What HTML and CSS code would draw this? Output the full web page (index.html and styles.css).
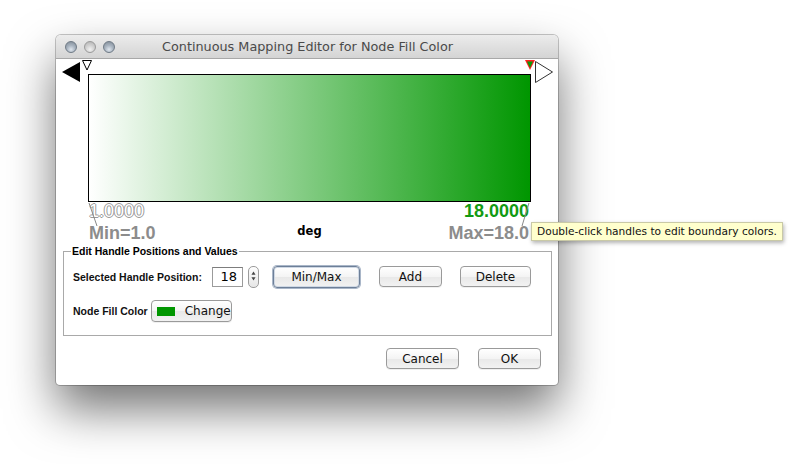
FILE: index.html
```html
<!DOCTYPE html>
<html>
<head>
<meta charset="utf-8">
<link rel="stylesheet" href="styles.css">
</head>
<body>
<div class="window">
  <div class="titlebar">
    <div class="lights">
      <span class="light"></span>
      <span class="light light-mid"></span>
      <span class="light"></span>
    </div>
    <div class="title">Continuous Mapping Editor for Node Fill Color</div>
  </div>
  <div class="content">
    <div class="slider">
      <div class="gradient"></div>
      <div class="values">
        <span class="val-min">1.0000</span>
        <span class="val-max">18.0000</span>
      </div>
      <div class="bounds">
        <span class="bound">Min=1.0</span>
        <span class="unit">deg</span>
        <span class="bound bound-max">Max=18.0</span>
      </div>
      <svg class="overlay" width="502" height="190" viewBox="0 0 502 190">
        <polygon points="6,13 24,3 24,23" fill="#000"/>
        <polygon points="26.5,1.5 35.5,1.5 31,11" fill="#fff" stroke="#000" stroke-width="1"/>
        <polygon points="469,1 479,1 474,11" fill="#ff2020"/>
        <polygon points="471,2.5 477,2.5 474,9" fill="#0a9a0a"/>
        <polygon points="479.5,2.5 479.5,23.5 496.5,13" fill="#fff" stroke="#333" stroke-width="1"/>
        <line x1="33" y1="144" x2="41" y2="167" stroke="#888" stroke-width="1"/>
        <line x1="473" y1="144" x2="466" y2="167" stroke="#888" stroke-width="1"/>
      </svg>
      <div class="tooltip">Double-click handles to edit boundary colors.</div>
    </div>
    <fieldset class="group">
      <legend>Edit Handle Positions and Values</legend>
      <div class="row row-handle">
        <span class="label">Selected Handle Position:</span>
        <span class="spin-field">18</span>
        <span class="stepper">
          <svg width="11" height="22" viewBox="0 0 11 22">
            <polygon points="3,9.5 8,9.5 5.5,5.5" fill="#444"/>
            <polygon points="3,12.5 8,12.5 5.5,16.5" fill="#444"/>
          </svg>
        </span>
        <button class="btn btn-focus btn-minmax">Min/Max</button>
        <button class="btn btn-add">Add</button>
        <button class="btn btn-delete">Delete</button>
      </div>
      <div class="row row-color">
        <span class="label">Node Fill Color</span>
        <button class="btn btn-change"><span class="swatch"></span>Change</button>
      </div>
    </fieldset>
    <div class="actions">
      <button class="btn btn-cancel">Cancel</button>
      <button class="btn btn-ok">OK</button>
    </div>
  </div>
</div>
</body>
</html>
```
FILE: styles.css
```css
html, body {
  margin: 0;
  padding: 0;
  background: #fff;
}
body {
  width: 797px;
  height: 464px;
  overflow: hidden;
  font-family: "DejaVu Sans", "Liberation Sans", sans-serif;
}
.window {
  position: relative;
  margin: 35px 0 0 56px;
  width: 502px;
  height: 350px;
  background: #fff;
  border-radius: 5px 5px 4px 4px;
  box-shadow: 0 0 0 1px rgba(0,0,0,0.22), 0 24px 48px rgba(0,0,0,0.55);
}
.titlebar {
  position: relative;
  height: 24px;
  border-radius: 5px 5px 0 0;
  background: linear-gradient(#ececec, #d4d4d4);
  border-bottom: 1px solid #a8a8a8;
  display: flex;
  align-items: center;
  box-sizing: border-box;
}
.lights {
  display: flex;
  gap: 7px;
  padding-left: 9px;
}
.light {
  width: 12px;
  height: 12px;
  border-radius: 50%;
  box-sizing: border-box;
  border: 1px solid #6f7a86;
  background: radial-gradient(circle at 50% 75%, #dfe6ee 0%, #a9b4c0 45%, #7d8893 100%);
}
.light-mid {
  border-color: #9a9a9a;
  background: radial-gradient(circle at 50% 75%, #f2f2f2 0%, #d2d2d2 45%, #b0b0b0 100%);
}
.title {
  flex: 1;
  text-align: center;
  font-size: 12.8px;
  color: #4a4a4a;
  padding-right: 58px;
}
.content {
  position: relative;
}
.slider {
  position: relative;
  height: 186px;
  box-sizing: border-box;
  padding-top: 15px;
}
.gradient {
  margin-left: 32px;
  width: 443px;
  height: 128px;
  box-sizing: border-box;
  border: 1px solid #000;
  background: linear-gradient(to right, #ffffff, #009600);
}
.values, .bounds {
  margin-left: 33px;
  width: 441px;
  font-family: "Liberation Sans", sans-serif;
}
.values {
  display: flex;
  justify-content: space-between;
  height: 18px;
  font-size: 18px;
  line-height: 18px;
}
.val-min {
  color: #fff;
  text-shadow: -1px 0 #9a9a9a, 1px 0 #9a9a9a, 0 -1px #9a9a9a, 0 1px #9a9a9a;
}
.val-max {
  color: #129a12;
  font-weight: bold;
  margin-right: 1px;
}
.bounds {
  display: grid;
  grid-template-columns: 1fr auto 1fr;
  align-items: baseline;
  margin-top: 3px;
  font-size: 18px;
  line-height: 20px;
  font-weight: bold;
}
.bound {
  color: #8c8c8c;
}
.bound-max {
  text-align: right;
  margin-right: 1px;
}
.unit {
  font-family: "DejaVu Sans", sans-serif;
  font-size: 11.5px;
  color: #000;
  position: relative;
  top: -4px;
}
.overlay {
  position: absolute;
  left: 0;
  top: 0;
  pointer-events: none;
}
.tooltip {
  position: absolute;
  left: 475px;
  top: 163px;
  width: 252px;
  height: 19px;
  box-sizing: border-box;
  background: #ffffcd;
  border: 1px solid #c9c9a6;
  box-shadow: 1px 2px 4px rgba(0,0,0,0.3);
  font-size: 10.6px;
  line-height: 17px;
  padding-left: 5px;
  color: #111;
  white-space: nowrap;
}
.group {
  margin: 0 0 0 7px;
  width: 489px;
  height: 91px;
  box-sizing: border-box;
  padding: 0 0 0 9px;
  border: 1px solid #a9a9a9;
  border-radius: 0;
}
.group legend {
  font-family: "Liberation Sans", sans-serif;
  font-size: 10.5px;
  font-weight: bold;
  padding: 0 1px;
  margin-left: -2px;
  line-height: 13px;
}
.row {
  display: flex;
  align-items: center;
}
.row-handle {
  height: 23px;
  margin-top: 7px;
}
.row-color {
  height: 24px;
  margin-top: 11px;
}
.label {
  font-family: "Liberation Sans", sans-serif;
  font-size: 10.5px;
  font-weight: bold;
  color: #111;
  white-space: nowrap;
}
.spin-field {
  margin-left: 10px;
  width: 31px;
  height: 20px;
  box-sizing: border-box;
  border: 1px solid #9b9b9b;
  border-top-color: #7d7d7d;
  text-align: right;
  padding-right: 5px;
  font-size: 13px;
  line-height: 18px;
}
.stepper {
  margin-left: 5px;
  width: 11px;
  height: 22px;
  box-sizing: border-box;
  border: 1px solid #9c9c9c;
  border-radius: 5px;
  background: linear-gradient(#fdfdfd, #e6e6e6);
  display: flex;
  align-items: center;
  justify-content: center;
  overflow: hidden;
}
.stepper svg {
  display: block;
  margin-top: -1px;
}
.btn {
  font-family: "DejaVu Sans", sans-serif;
  font-size: 12px;
  color: #111;
  height: 21px;
  padding: 0;
  box-sizing: border-box;
  border: 1px solid #9a9a9a;
  border-radius: 4px;
  background: linear-gradient(#ffffff 0%, #f4f4f4 50%, #e8e8e8 51%, #f2f2f2 100%);
  box-shadow: 0 1px 0 rgba(0,0,0,0.06);
  display: flex;
  align-items: center;
  justify-content: center;
}
.btn-focus {
  border-color: #6d7f98;
  box-shadow: 0 0 0 1px #a9b6c8, inset 0 0 0 1px #cfd8e4;
}
.btn-minmax {
  margin-left: 14px;
  width: 87px;
  height: 22px;
}
.btn-add {
  margin-left: 19px;
  width: 63px;
}
.btn-delete {
  margin-left: 18px;
  width: 71px;
}
.btn-change {
  margin-left: 3px;
  width: 81px;
  height: 22px;
  justify-content: flex-start;
  padding-left: 5px;
}
.swatch {
  width: 20px;
  height: 9px;
  background: #009600;
  margin-right: 10px;
}
.actions {
  display: flex;
  justify-content: flex-end;
  gap: 19px;
  padding: 12px 17px 0 0;
}
.btn-cancel {
  width: 73px;
}
.btn-ok {
  width: 63px;
}
```
